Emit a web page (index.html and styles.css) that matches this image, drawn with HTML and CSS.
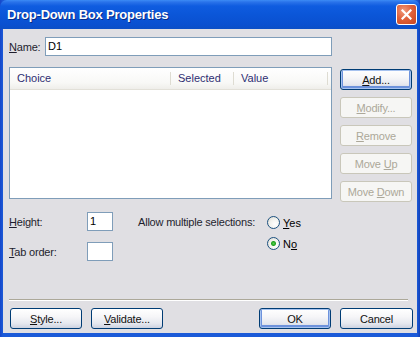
FILE: index.html
```html
<!DOCTYPE html>
<html lang="en">
<head>
    <meta charset="UTF-8">
    <title>Drop-Down Box Properties</title>
    <link rel="stylesheet" href="styles.css">
</head>
<body>
    <div class="window">
        <div class="titlebar">
            <span class="title">Drop-Down Box Properties</span>
            <span class="close">
                <svg width="11" height="11" viewBox="0 0 11 11">
                    <path d="M1.5 1.5 L9.5 9.5 M9.5 1.5 L1.5 9.5" stroke="#fff" stroke-width="2.2" stroke-linecap="square"/>
                </svg>
            </span>
        </div>
        <div class="client">
            <div class="name-row">
                <span class="lbl name-lbl"><u>N</u>ame:</span>
                <div class="textbox name-box">D1</div>
            </div>

            <div class="main">
                <div class="listview">
                    <div class="lv-head">
                        <div class="col col-choice">Choice</div>
                        <div class="col col-selected">Selected</div>
                        <div class="col col-value">Value</div>
                    </div>
                </div>
                <div class="side-buttons">
                    <button class="btn default"><u>A</u>dd...</button>
                    <button class="btn" disabled><u>M</u>odify...</button>
                    <button class="btn" disabled><u>R</u>emove</button>
                    <button class="btn" disabled>Move <u>U</u>p</button>
                    <button class="btn" disabled>Move <u>D</u>own</button>
                </div>
            </div>

            <div class="options">
                <div class="fields">
                    <div class="field">
                        <span class="lbl field-lbl"><u>H</u>eight:</span>
                        <div class="textbox small-box">1</div>
                    </div>
                    <div class="field">
                        <span class="lbl field-lbl"><u>T</u>ab order:</span>
                        <div class="textbox small-box"></div>
                    </div>
                </div>
                <div class="multi">
                    <span class="lbl multi-lbl">Allow multiple selections:</span>
                    <div class="radios">
                        <div class="radio"><span class="dot"></span><span><u>Y</u>es</span></div>
                        <div class="radio checked"><span class="dot"></span><span>N<u>o</u></span></div>
                    </div>
                </div>
            </div>

            <div class="footer">
                <div class="separator"></div>
                <div class="footer-buttons">
                    <button class="btn"><u>S</u>tyle...</button>
                    <button class="btn"><u>V</u>alidate...</button>
                    <span class="spacer"></span>
                    <button class="btn default">OK</button>
                    <button class="btn cancel">Cancel</button>
                </div>
            </div>
        </div>
    </div>
</body>
</html>
```

FILE: styles.css
```css
body{
    margin: 0;
    padding: 0;

    font-family: 'Liberation Sans', Arial, sans-serif;
    font-size: 11px;
}

.window{
    width: 420px;
    height: 337px;

    display: flex;
    flex-direction: column;

    background: linear-gradient(90deg, #1546c9 0, #1b5ad8 3px, #1b5ad8 417px, #1240b8 420px);
}

.titlebar{
    height: 29px;

    display: flex;
    align-items: center;

    padding: 0 3px 0 7px;

    border-radius: 7px 7px 0 0;

    background: linear-gradient(#3c8cf5 0, #2a73ea 2px, #0f5ce0 6px, #0b56d8 50%, #0a50d0 85%, #0c4fc6 100%);
}

.title{
    flex: 1;

    color: #fff;
    font-size: 13px;
    font-weight: bold;
    letter-spacing: -0.2px;

    text-shadow: 1px 1px 0 #0a2c86;
}

.close{
    width: 19px;
    height: 19px;

    display: flex;
    align-items: center;
    justify-content: center;

    border: 1px solid #fff;
    border-radius: 3px;

    background: radial-gradient(circle at 35% 30%, #f09a7c 0, #e0623c 45%, #c7441e 100%);
}

.client{
    flex: 1;

    display: flex;
    flex-direction: column;

    margin: 0 3px 4px 3px;

    background-color: #e0dfe3;
}

.lbl{
    color: #1e1e2e;
    letter-spacing: -0.2px;
}

.textbox{
    box-sizing: border-box;
    height: 19px;
    line-height: 17px;

    padding-left: 2px;

    border: 1px solid #7f9db9;

    background: #fff;
}

.name-row{
    display: flex;
    align-items: center;

    margin-top: 8px;
    padding-left: 6px;
}

.name-lbl{
    width: 36px;
}

.name-box{
    width: 287px;
}

.main{
    display: flex;

    margin-top: 11px;
    padding-left: 6px;
}

.listview{
    box-sizing: border-box;
    width: 323px;
    height: 132px;

    border: 1px solid #7f9db9;

    background: #fff;
}

.lv-head{
    display: flex;

    height: 21px;

    border-bottom: 1px solid #e2e0d8;

    background: linear-gradient(#fff, #f8f8f6 70%, #efeeea);
}

.col{
    box-sizing: border-box;
    height: 21px;
    line-height: 21px;

    padding-left: 7px;

    color: #2e2e72;

    background: linear-gradient(#dedcd2, #dedcd2) right 4px / 1px 13px no-repeat;
}

.col-choice{
    width: 161px;
}

.col-selected{
    width: 63px;
}

.col-value{
    width: 94px;
}

.side-buttons{
    display: flex;
    flex-direction: column;
    gap: 7px;

    margin-left: 8px;
    padding-top: 2px;
}

.btn{
    box-sizing: border-box;
    width: 72px;
    height: 21px;

    padding: 0;

    border: 1px solid #003c74;
    border-radius: 3px;

    background: linear-gradient(#ffffff 0, #f6f6f8 40%, #e6e8ef 75%, #cdd2e0 100%);

    font-family: 'Liberation Sans', Arial, sans-serif;
    font-size: 11px;
    letter-spacing: -0.2px;
    color: #111;
}

.btn.default{
    box-shadow: inset 0 0 0 1px #a6c2ef, inset 0 -1px 0 2px #6d92dc;
}

.btn:disabled{
    border-color: #c9c7ba;

    background: #f6f6f4;

    color: #aca899;
}

.btn.cancel{
    width: 73px;
}

.options{
    display: flex;

    margin-top: 10px;
    padding-left: 6px;
}

.fields{
    display: flex;
    flex-direction: column;
    gap: 11px;
}

.field{
    display: flex;
    align-items: center;
}

.field-lbl{
    width: 78px;
}

.small-box{
    width: 26px;
}

.multi{
    display: flex;

    margin-left: 25px;
}

.multi-lbl{
    width: 129px;

    line-height: 21px;
}

.radios{
    display: flex;
    flex-direction: column;
}

.radio{
    display: flex;
    align-items: center;

    height: 21px;
}

.dot{
    box-sizing: border-box;
    width: 13px;
    height: 13px;

    margin-right: 3px;

    border: 1px solid #1c5180;
    border-radius: 50%;

    background: radial-gradient(circle at 65% 65%, #fff 0, #f2f2ee 50%, #d8d6cc 100%);
}

.radio.checked .dot{
    background:
        radial-gradient(circle, #55d34a 0, #21a121 2px, transparent 3px),
        radial-gradient(circle at 65% 65%, #fff 0, #f2f2ee 50%, #d8d6cc 100%);
}

.footer{
    margin-top: auto;
}

.separator{
    margin: 0 9px 0 6px;

    border-top: 1px solid #aca899;
    border-bottom: 1px solid #fff;
}

.footer-buttons{
    display: flex;
    gap: 9px;

    padding: 7px 4px 4px 7px;
}

.spacer{
    flex: 1;
}
```
